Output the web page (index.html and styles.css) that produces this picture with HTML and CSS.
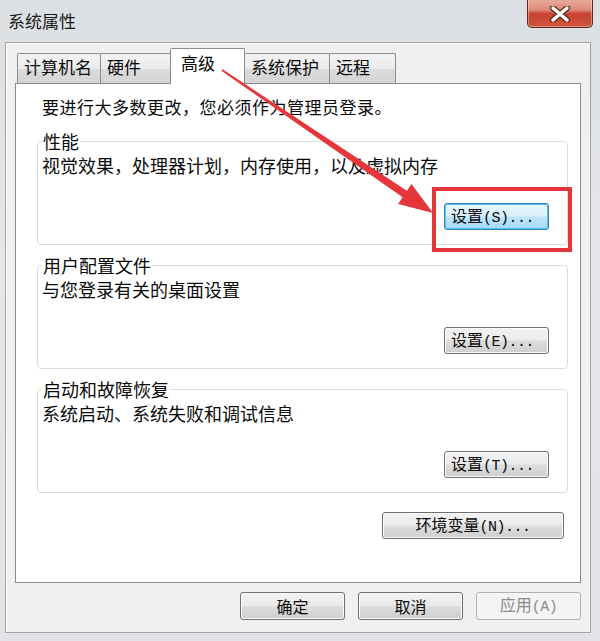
FILE: index.html
```html
<!DOCTYPE html>
<html lang="zh-CN">
<head>
<meta charset="utf-8">
<title>系统属性</title>
<link rel="stylesheet" href="styles.css">
</head>
<body>
<div class="window">
  <div class="titlebar">
    <span class="title">系统属性</span>
    <div class="close">
      <svg width="22" height="16" viewBox="0 0 22 16"><path d="M4 2 L18 14 M18 2 L4 14" stroke="#5a2a20" stroke-width="6" stroke-linecap="round"/><path d="M4 2 L18 14 M18 2 L4 14" stroke="#ffffff" stroke-width="3.4" stroke-linecap="round"/></svg>
    </div>
  </div>
  <div class="client">
    <div class="tabs">
      <div class="tab t1">计算机名</div>
      <div class="tab t2">硬件</div>
      <div class="tab t3 active">高级</div>
      <div class="tab t4">系统保护</div>
      <div class="tab t5">远程</div>
    </div>
    <div class="panel">
      <p class="note">要进行大多数更改，您必须作为管理员登录。</p>
      <fieldset class="group">
        <legend>性能</legend>
        <p class="desc">视觉效果，处理器计划，内存使用，以及虚拟内存</p>
        <div class="row"><button class="btn focus">设置<span class="mono">(S)...</span></button></div>
      </fieldset>
      <fieldset class="group">
        <legend>用户配置文件</legend>
        <p class="desc">与您登录有关的桌面设置</p>
        <div class="row"><button class="btn">设置<span class="mono">(E)...</span></button></div>
      </fieldset>
      <fieldset class="group">
        <legend>启动和故障恢复</legend>
        <p class="desc">系统启动、系统失败和调试信息</p>
        <div class="row"><button class="btn">设置<span class="mono">(T)...</span></button></div>
      </fieldset>
      <div class="env-row"><button class="btn env">环境变量<span class="mono">(N)...</span></button></div>
    </div>
    <div class="footer">
      <button class="btn foot">确定</button>
      <button class="btn foot">取消</button>
      <button class="btn foot disabled">应用<span class="mono">(A)</span></button>
    </div>
  </div>
  <svg class="annot" width="600" height="641" viewBox="0 0 600 641">
    <polygon points="221.4,70.8 222.6,69.2 410.3,192.9 405.9,199.5" fill="#e5363b"/>
    <polygon points="433,213 398.1,203.9 411.5,184.1" fill="#e5363b"/>
    <rect x="434" y="189" width="136" height="61" fill="none" stroke="#e5363b" stroke-width="4"/>
  </svg>
</div>
</body>
</html>
```

FILE: styles.css
```css
* { box-sizing: border-box; }
html, body { margin: 0; padding: 0; }
body {
  width: 600px;
  height: 641px;
  overflow: hidden;
  font-family: "Noto Sans CJK SC", "Noto Sans", sans-serif;
  color: #0a0a0a;
}
.window {
  position: relative;
  width: 600px;
  height: 641px;
  background: linear-gradient(180deg, #dcdfe3 0%, #e5e7ea 40%, #e1e3e6 100%);
  display: flex;
  flex-direction: column;
}
.titlebar {
  height: 42px;
  display: flex;
  align-items: flex-start;
  justify-content: space-between;
  flex: none;
}
.title {
  font-size: 17px;
  line-height: 24px;
  margin: 9px 0 0 8px;
  color: #1a1a1a;
}
.close {
  width: 66px;
  height: 30px;
  margin-right: 7px;
  margin-top: -2px;
  border: 1px solid #5b2b22;
  border-top: none;
  border-radius: 0 0 5px 5px;
  background: linear-gradient(180deg, #eab0a2 0%, #dd8a77 40%, #c7432f 55%, #d0563b 100%);
  box-shadow: inset 0 0 0 1px rgba(255,255,255,0.35);
  display: flex;
  align-items: center;
  justify-content: center;
  padding-top: 2px;
}
.client {
  flex: 1;
  margin: 0 9px 8px 5px;
  border: 1px solid #a3a3a3;
  box-shadow: inset 1px 1px 0 #ffffff;
  background: #f0f0f0;
  padding: 5px 9px 0 9px;
  display: flex;
  flex-direction: column;
}
.tabs {
  height: 35px;
  display: flex;
  align-items: flex-end;
  padding-left: 2px;
  position: relative;
  z-index: 1;
}
.tab {
  height: 30px;
  font-size: 17px;
  line-height: 26px;
  padding-left: 6px;
  border: 1px solid #898c95;
  border-bottom: none;
  border-radius: 2px 2px 0 0;
  background: linear-gradient(180deg, #f3f3f3 0%, #ebebeb 50%, #dcdcdc 51%, #d4d4d4 100%);
  margin-right: -1px;
}
.t1 { width: 84px; }
.t2 { width: 71px; }
.t3 { width: 75px; }
.t4 { width: 86px; }
.t5 { width: 67px; }
.tab.active {
  height: 36px;
  background: #ffffff;
  padding-left: 10px;
  line-height: 28px;
  margin-bottom: -1px;
  position: relative;
  z-index: 2;
}
.panel {
  width: 566px;
  height: 500px;
  background: #ffffff;
  border: 1px solid #898c95;
  padding: 11px 12px 0 21px;
  display: flex;
  flex-direction: column;
}
.note {
  margin: 0;
  padding-left: 5px;
  font-size: 17px;
  line-height: 24px;
  letter-spacing: 0.5px;
}
.group {
  margin: 10px 0 0 0;
  padding: 0 18px 14px 4px;
  border: 1px solid #dcdcdc;
  border-radius: 4px;
  min-width: 0;
}
.group + .group { margin-top: 8px; }
.group legend {
  padding: 0 1px;
  font-size: 18px;
  line-height: 24px;
}
.desc {
  margin: 0;
  font-size: 18px;
  line-height: 24px;
}
.row {
  display: flex;
  justify-content: flex-end;
  margin-top: 26px;
}
.btn {
  height: 27px;
  width: 105px;
  font-family: "Noto Sans CJK SC", "Noto Sans", sans-serif;
  font-size: 16px;
  line-height: 20px;
  color: #0a0a0a;
  border: 1px solid #707070;
  border-radius: 3px;
  background: linear-gradient(180deg, #f2f2f2 0%, #ebebeb 48%, #dddddd 52%, #cfcfcf 100%);
  box-shadow: inset 0 0 0 1px #fbfbfb;
  padding: 0 6px;
  text-align: left;
  white-space: nowrap;
}
.mono {
  font-family: "Liberation Mono", "DejaVu Sans Mono", monospace;
  font-size: 15px;
  letter-spacing: -0.5px;
}
.btn.focus {
  border-color: #3c7fb1;
  background: linear-gradient(180deg, #eaf6fd 0%, #d9f0fc 48%, #bee6fd 52%, #a7d9f5 100%);
  box-shadow: inset 0 0 0 1px #4fc8f0;
}
.env-row {
  display: flex;
  justify-content: flex-end;
  margin-top: 19px;
  padding-right: 4px;
}
.btn.env {
  width: 182px;
  text-align: center;
}
.footer {
  display: flex;
  justify-content: flex-end;
  gap: 13px;
  margin-top: 9px;
  padding-right: 0;
}
.btn.foot {
  width: 105px;
  height: 28px;
  text-align: center;
}
.btn.disabled {
  color: #8a8a8a;
  border-color: #adb2b5;
  background: #f4f4f4;
  box-shadow: none;
}
.annot {
  position: absolute;
  left: 0;
  top: 0;
  pointer-events: none;
  z-index: 5;
}
```
